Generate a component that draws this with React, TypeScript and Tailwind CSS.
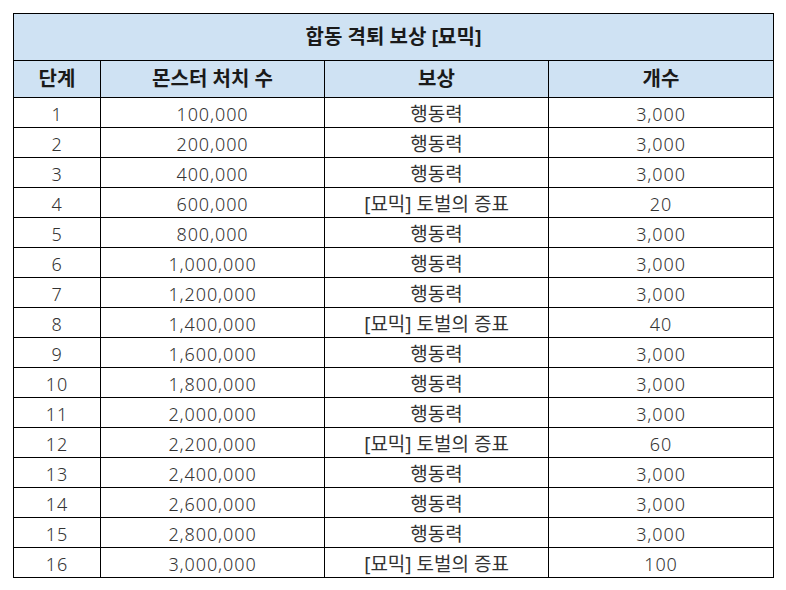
const rows: [number, string, string, string][] = [
  [1, "100,000", "행동력", "3,000"],
  [2, "200,000", "행동력", "3,000"],
  [3, "400,000", "행동력", "3,000"],
  [4, "600,000", "[묘믹] 토벌의 증표", "20"],
  [5, "800,000", "행동력", "3,000"],
  [6, "1,000,000", "행동력", "3,000"],
  [7, "1,200,000", "행동력", "3,000"],
  [8, "1,400,000", "[묘믹] 토벌의 증표", "40"],
  [9, "1,600,000", "행동력", "3,000"],
  [10, "1,800,000", "행동력", "3,000"],
  [11, "2,000,000", "행동력", "3,000"],
  [12, "2,200,000", "[묘믹] 토벌의 증표", "60"],
  [13, "2,400,000", "행동력", "3,000"],
  [14, "2,600,000", "행동력", "3,000"],
  [15, "2,800,000", "행동력", "3,000"],
  [16, "3,000,000", "[묘믹] 토벌의 증표", "100"],
];

const font = "font-['Noto_Sans','Noto_Sans_CJK_KR',sans-serif]";
const head = "border border-black font-bold text-[20px] text-[#1a1a1a] p-0";
const num = "border border-black text-center p-0 pt-[3px] text-[18px] leading-[22px] tracking-[0.05em] font-light";

export default function App() {
  return (
    <div className={`w-[786px] h-[590px] bg-white pt-[13px] pl-[13px] ${font}`}>
      <table className="w-[760px] border-collapse table-fixed text-[#333]">
        <colgroup>
          <col className="w-[87px]" />
          <col className="w-[224px]" />
          <col className="w-[224px]" />
          <col className="w-[225px]" />
        </colgroup>
        <thead>
          <tr className="h-[47px] bg-[#cfe2f3]">
            <th colSpan={4} className={head}>
              합동 격퇴 보상 [묘믹]
            </th>
          </tr>
          <tr className="h-[37px] bg-[#cfe2f3]">
            <th className={head}>단계</th>
            <th className={head}>몬스터 처치 수</th>
            <th className={head}>보상</th>
            <th className={head}>개수</th>
          </tr>
        </thead>
        <tbody>
          {rows.map(([step, kills, reward, count]) => (
            <tr key={step} className="h-[30px]">
              <td className={num}>{step}</td>
              <td className={num}>{kills}</td>
              <td className="border border-black text-center p-0 pt-[2px] text-[19px] leading-[22px]">
                {reward}
              </td>
              <td className={num}>{count}</td>
            </tr>
          ))}
        </tbody>
      </table>
    </div>
  );
}
